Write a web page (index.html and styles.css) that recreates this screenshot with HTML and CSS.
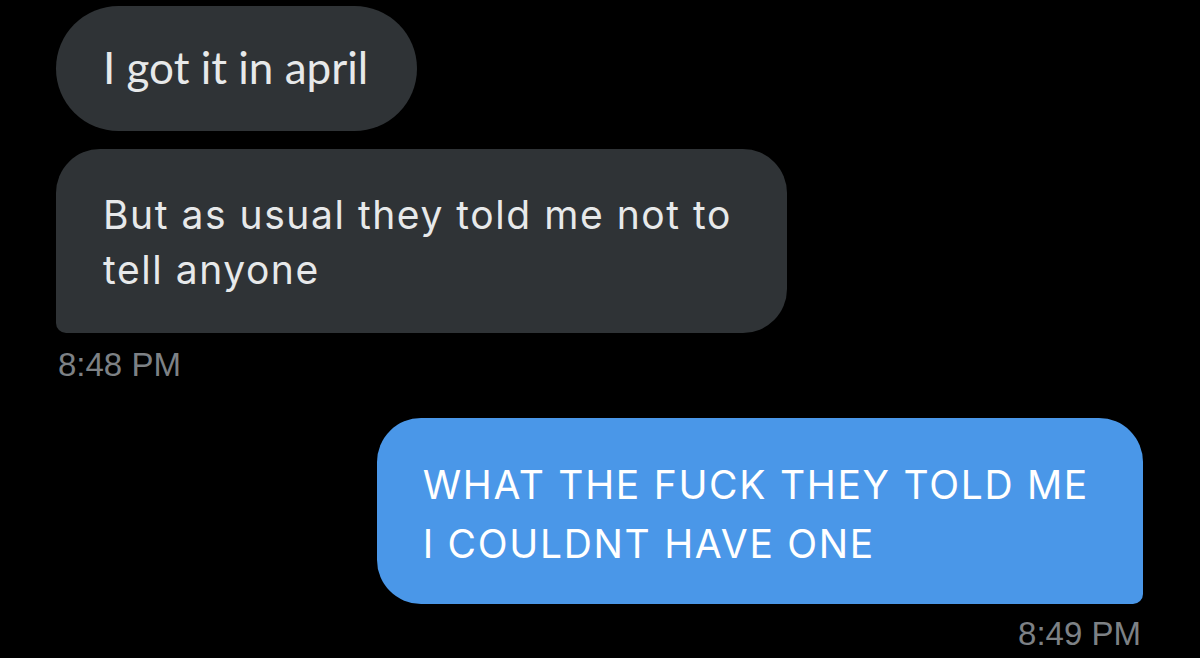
FILE: index.html
```html
<!DOCTYPE html>
<html lang="en">
<head>
<meta charset="utf-8">
<title>Messages</title>
<link rel="stylesheet" href="styles.css">
</head>
<body>
<main class="thread">
  <div class="group group-in">
    <div class="bubble bubble-in bubble-pill">I got it in april</div>
    <div class="bubble bubble-in bubble-last-in">But as usual they told me not to<br>tell anyone</div>
    <div class="time">8:48 PM</div>
  </div>
  <div class="group group-out">
    <div class="bubble bubble-out">WHAT THE FUCK THEY TOLD ME<br>I COULDNT HAVE ONE</div>
    <div class="time time-out">8:49 PM</div>
  </div>
</main>
</body>
</html>
```

FILE: styles.css
```css
html, body {
  margin: 0;
  padding: 0;
  background: #000;
}

body {
  width: 1200px;
  height: 658px;
  overflow: hidden;
}

.thread {
  display: flex;
  flex-direction: column;
  gap: 34px;
  padding: 6px 57px 0 56px;
}

.group {
  display: flex;
  flex-direction: column;
}

.group-in {
  align-items: flex-start;
}

.group-out {
  align-items: flex-end;
}

.bubble {
  box-sizing: border-box;
  font-family: "Inter", "Liberation Sans", sans-serif;
  font-size: 39px;
  letter-spacing: 1.7px;
}

.bubble-in {
  background: #2f3336;
  color: #e7e9ea;
}

.bubble-pill {
  font-family: "Lato", sans-serif;
  font-size: 44px;
  letter-spacing: 0;
  line-height: 53px;
  padding: 35px 49px 37px 47px;
  border-radius: 63px;
}

.bubble-last-in {
  margin-top: 18px;
  letter-spacing: 1.55px;
  line-height: 55px;
  padding: 38px 55px 36px 47px;
  border-radius: 44px 44px 44px 10px;
}

.bubble-out {
  background: #4a97e8;
  color: #fff;
  line-height: 59px;
  padding: 37px 54px 31px 46px;
  border-radius: 44px 44px 10px 44px;
}

.time {
  font-family: "Liberation Sans", Arial, sans-serif;
  font-size: 33px;
  line-height: 38px;
  color: #7d8185;
  margin-top: 13px;
  padding-left: 2px;
}

.time-out {
  margin-top: 11px;
  padding: 0 2px 0 0;
}
```
